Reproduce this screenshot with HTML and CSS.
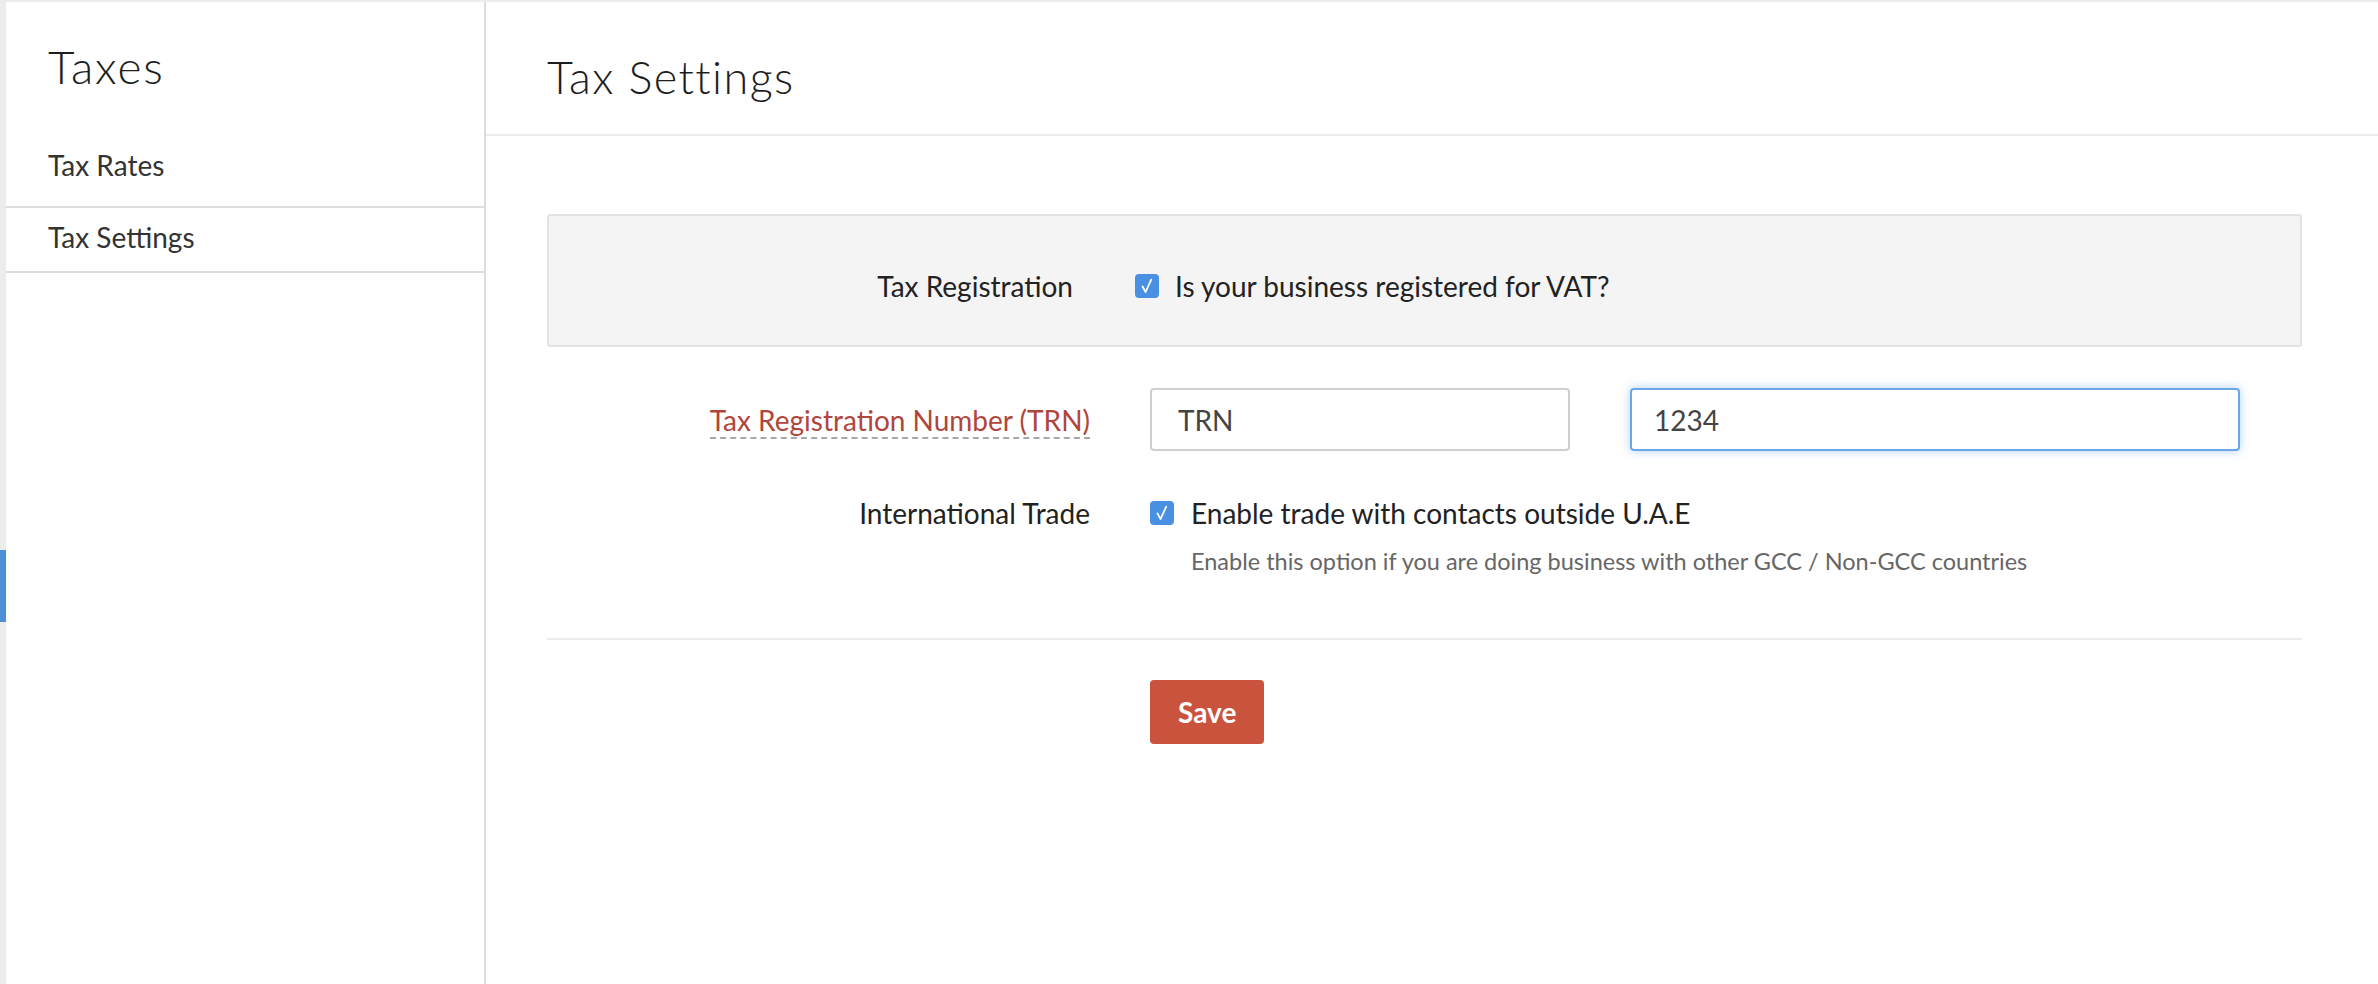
FILE: index.html
```html
<!DOCTYPE html>
<html>
	<head>
		<meta charset="utf-8">
		<title>Tax Settings</title>
		<link rel="stylesheet" href="styles.css">
	</head>
	<body>
	<div class="page">
		<div class="edge"><div class="edge-mark"></div></div>
		<aside class="sidebar">
			<h1 class="side-title">Taxes</h1>
			<ul class="side-nav">
				<li>Tax Rates</li>
				<li class="active">Tax Settings</li>
			</ul>
		</aside>
		<main class="content">
			<header class="content-head">
				<h2>Tax Settings</h2>
			</header>
			<form class="settings">
				<div class="panel">
					<div class="row">
						<label class="row-label">Tax Registration</label>
						<div class="row-field">
							<span class="check"><svg width="20" height="20" viewBox="0 0 20 20"><path d="M5.5 10.5 L8.6 16 L14.2 3.6" fill="none" stroke="#fff" stroke-width="1.8" stroke-linecap="round" stroke-linejoin="round"/></svg></span>
							<span>Is your business registered for VAT?</span>
						</div>
					</div>
				</div>
				<div class="row row-trn">
					<label class="row-label"><span class="label-warn">Tax Registration Number (TRN)</span></label>
					<div class="row-field">
						<input type="text" class="input input-trn" value="TRN">
						<input type="text" class="input input-num" value="1234">
					</div>
				</div>
				<div class="row row-trade">
					<label class="row-label">International Trade</label>
					<div class="row-field stack">
						<div class="field-line">
							<span class="check"><svg width="20" height="20" viewBox="0 0 20 20"><path d="M5.5 10.5 L8.6 16 L14.2 3.6" fill="none" stroke="#fff" stroke-width="1.8" stroke-linecap="round" stroke-linejoin="round"/></svg></span>
							<span>Enable trade with contacts outside U.A.E</span>
						</div>
						<div class="help">Enable this option if you are doing business with other GCC / Non-GCC countries</div>
					</div>
				</div>
				<div class="divider"></div>
				<div class="actions">
					<button type="button" class="btn-save">Save</button>
				</div>
			</form>
		</main>
	</div>
	</body>
</html>
```

FILE: styles.css
```css
* {
	box-sizing: border-box;
}
body {
	margin: 0;
	font-family: Lato, "Open Sans", sans-serif;
	color: #222;
	background: #fff;
}
.page {
	display: flex;
	height: 984px;
	border-top: 2px solid #ececec;
}
.edge {
	flex: none;
	width: 6px;
	background: #ececec;
}
.edge-mark {
	margin-top: 548px;
	height: 72px;
	background: #4a8fd7;
}
.sidebar {
	flex: none;
	width: 480px;
	border-right: 2px solid #dcdcdc;
}
.side-title {
	margin: 37px 0 41px 42px;
	font-size: 46px;
	line-height: 56px;
	font-weight: 300;
	letter-spacing: 1.8px;
	color: #1e1e1e;
}
.side-nav {
	list-style: none;
	margin: 0;
	padding: 0;
	font-size: 28px;
	line-height: 34px;
	color: #333;
}
.side-nav li {
	padding: 12px 0 17px 42px;
	border-bottom: 2px solid #dedede;
}
.side-nav li:first-child {
	padding-bottom: 24px;
}
.content {
	flex: 1;
}
.content-head {
	padding: 48px 0 30px 61px;
	border-bottom: 2px solid #ececec;
}
.content-head h2 {
	margin: 0;
	font-size: 45px;
	line-height: 54px;
	font-weight: 300;
	letter-spacing: 1.4px;
	color: #1e1e1e;
}
.settings {
	padding: 78px 76px 0 61px;
}
.panel {
	border: 2px solid #e3e3e3;
	border-radius: 3px;
	background: #f4f4f4;
}
.row {
	display: flex;
	align-items: center;
	font-size: 28px;
	line-height: 34px;
}
.row-label {
	flex: none;
	width: 543px;
	text-align: right;
}
.row-field {
	display: flex;
	align-items: center;
	margin-left: 60px;
}
.panel .row {
	padding: 53px 0 42px;
}
.panel .row-label {
	width: 524px;
}
.panel .row-field {
	margin-left: 62px;
}
.check {
	flex: none;
	display: inline-flex;
	align-items: center;
	justify-content: center;
	width: 24px;
	height: 24px;
	margin-right: 16px;
	border-radius: 4px;
	background: #4a90e2;
}
.label-warn {
	color: #b0453c;
	border-bottom: 2px dashed #a8a8a8;
}
.row-trn {
	margin-top: 41px;
}
.input {
	height: 63px;
	padding: 0 26px;
	border: 2px solid #cfcfcf;
	border-radius: 4px;
	font-family: inherit;
	font-size: 28px;
	color: #444;
	outline: none;
}
.input-trn {
	width: 420px;
}
.input-num {
	width: 610px;
	margin-left: 60px;
	padding-left: 22px;
	border-color: #6ba6e8;
	box-shadow: 0 0 10px rgba(102, 166, 233, 0.5);
}
.row-trade {
	align-items: flex-start;
	margin-top: 45px;
}
.stack {
	display: block;
}
.field-line {
	display: flex;
	align-items: center;
}
.field-line .check {
	margin-right: 17px;
}
.help {
	margin-top: 16px;
	padding-left: 41px;
	font-size: 23.5px;
	line-height: 30px;
	color: #666;
}
.divider {
	margin-top: 62px;
	border-top: 2px solid #ececec;
}
.actions {
	margin: 40px 0 0 603px;
}
.btn-save {
	height: 64px;
	padding: 0 28px;
	border: none;
	border-radius: 4px;
	background: #c9533d;
	color: #fff;
	font-family: inherit;
	font-size: 28px;
	font-weight: 700;
}
```
